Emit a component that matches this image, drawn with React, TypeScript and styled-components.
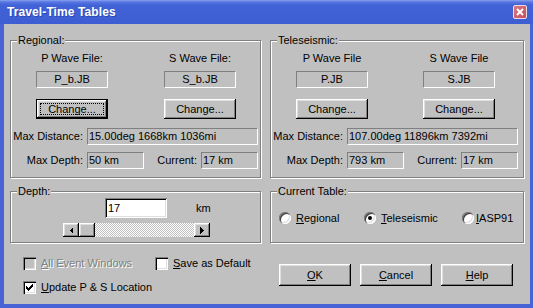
import React from 'react';
import styled, { createGlobalStyle, css } from 'styled-components';

const Global = createGlobalStyle`
  html, body { margin: 0; padding: 0; background: #c0c0c0; }
  body { font-family: "Liberation Sans", Arial, sans-serif; font-size: 11px; color: #000; }
  * { box-sizing: border-box; }
`;

const raised = css`
  box-shadow: inset -1px -1px #000, inset 1px 1px #fff, inset -2px -2px #808080, inset 2px 2px #dfdfdf;
`;

const Window = styled.div`
  width: 533px;
  height: 308px;
  display: flex;
  flex-direction: column;
  background: #4763d6;
`;

const TitleBar = styled.div`
  height: 24px;
  flex: none;
  display: flex;
  align-items: center;
  justify-content: space-between;
  padding: 0 6px 0 7px;
  background: linear-gradient(#86a2f0 0, #5877e2 2px, #4263d8 5px, #3d5dd3 100%);
`;

const Title = styled.span`
  font: bold 12px "Liberation Sans", Arial, sans-serif;
  color: #fff;
  text-shadow: 1px 1px #2c48b0;
  letter-spacing: 0.1px;
`;

const CloseButton = styled.div`
  width: 14px;
  height: 14px;
  border: 1px solid #f2dce2;
  border-radius: 2px;
  background: linear-gradient(135deg, #d87a86, #c2505e);
  display: flex;
  align-items: center;
  justify-content: center;
`;

const Body = styled.div`
  flex: 1;
  margin: 0 3px 4px 4px;
  background: #c0c0c0;
  padding: 16px 0 0 6px;
  display: flex;
  flex-direction: column;
`;

const GroupRow = styled.div<{ $top?: number }>`
  display: grid;
  grid-template-columns: 251px 254px;
  column-gap: 9px;
  margin-top: ${p => p.$top ?? 0}px;
`;

const Group = styled.div<{ $h: number }>`
  position: relative;
  height: ${p => p.$h}px;
  border: 1px solid #808080;
  box-shadow: inset 1px 1px #fff, 1px 1px #fff;
`;

const Legend = styled.span`
  position: absolute;
  top: -7px;
  left: 6px;
  padding: 0 1px;
  line-height: 13px;
  background: #c0c0c0;
`;

const FileRow = styled.div<{ $gap: number }>`
  display: flex;
  gap: ${p => p.$gap}px;
  margin: 11px 0 0 25px;
`;

const FileCol = styled.div`
  width: 72px;
  display: flex;
  flex-direction: column;
  align-items: center;
`;

const FileLabel = styled.div`
  line-height: 13px;
  white-space: nowrap;
`;

const Field = styled.div<{ $center?: boolean; $span?: boolean }>`
  height: 17px;
  width: 100%;
  border: 1px solid;
  border-color: #808080 #fff #fff #808080;
  line-height: 15px;
  padding: 0 1px;
  text-align: ${p => (p.$center ? 'center' : 'left')};
  white-space: nowrap;
  overflow: hidden;
  ${p => p.$span && css`grid-column: 2 / 5;`}
`;

const FileField = styled(Field)`
  margin-top: 6px;
`;

const Button = styled.div<{ $h?: number; $focused?: boolean; $w?: number }>`
  position: relative;
  width: ${p => p.$w ?? 72}px;
  height: ${p => p.$h ?? 20}px;
  background: #c0c0c0;
  display: flex;
  align-items: center;
  justify-content: center;
  ${raised}
  ${p =>
    p.$focused &&
    css`
      box-shadow: inset 0 0 0 1px #000, inset -2px -2px #000, inset 2px 2px #fff, inset -3px -3px #808080,
        inset 3px 3px #dfdfdf;
      &::after {
        content: '';
        position: absolute;
        inset: 4px;
        border: 1px dotted #000;
      }
    `}
`;

const FileButton = styled(Button)`
  margin-top: 11px;
`;

const InfoGrid = styled.div`
  display: grid;
  grid-template-columns: 71px 57px 49px 57px;
  grid-auto-rows: 17px;
  column-gap: 4px;
  row-gap: 7px;
  margin: 9px 0 0 1px;
`;

const InfoLabel = styled.div`
  text-align: right;
  line-height: 17px;
  white-space: nowrap;
`;

const DepthTop = styled.div`
  display: flex;
  align-items: center;
  margin: 6px 0 0 94px;
`;

const EditBox = styled.div`
  width: 62px;
  height: 20px;
  background: #fff;
  box-shadow: inset 1px 1px #808080, inset -1px -1px #fff, inset 2px 2px #000, inset -2px -2px #dfdfdf;
  padding: 0 3px;
  line-height: 20px;
`;

const Unit = styled.span`
  margin-left: 29px;
`;

const ScrollBar = styled.div`
  width: 147px;
  height: 14px;
  margin: 5px 0 0 52px;
  display: flex;
  background: repeating-conic-gradient(#fff 0 25%, #c0c0c0 0 50%) 0 0 / 2px 2px;
`;

const ScrollBtn = styled.div`
  width: 16px;
  height: 14px;
  flex: none;
  background: #c0c0c0;
  display: flex;
  align-items: center;
  justify-content: center;
  ${raised}
`;

const Track = styled.div`
  flex: 1;
  display: flex;
`;

const RadioRow = styled.div`
  display: grid;
  grid-template-columns: 85px 98px auto;
  margin: 19px 0 0 8px;
  height: 13px;
`;

const RadioItem = styled.div<{ $gap?: number }>`
  display: flex;
  align-items: center;
  gap: ${p => p.$gap ?? 5}px;
  white-space: nowrap;
`;

const RadioCircle = styled.span<{ $checked?: boolean }>`
  width: 12px;
  height: 12px;
  flex: none;
  border-radius: 50%;
  background: #fff;
  box-shadow: inset 1px 1px #808080, inset 2px 2px #404040, inset -1px -1px #fff, inset -2px -2px #dfdfdf;
  display: flex;
  align-items: center;
  justify-content: center;
  &::after {
    content: '';
    width: 4px;
    height: 4px;
    border-radius: 50%;
    background: ${p => (p.$checked ? '#000' : 'transparent')};
  }
`;

const BottomRow = styled.div`
  display: grid;
  grid-template-columns: 269px auto;
`;

const Checks = styled.div`
  display: flex;
  flex-direction: column;
  gap: 11px;
  padding: 14px 0 0 13px;
`;

const CheckLine = styled.div`
  display: flex;
  height: 13px;
`;

const CheckItem = styled.div<{ $w?: number; $disabled?: boolean }>`
  display: flex;
  align-items: center;
  gap: 5px;
  width: ${p => (p.$w ? `${p.$w}px` : 'auto')};
  white-space: nowrap;
  line-height: 13px;
  ${p =>
    p.$disabled &&
    css`
      color: #808080;
      text-shadow: 1px 1px #fff;
    `}
`;

const CheckBox = styled.span<{ $disabled?: boolean }>`
  width: 13px;
  height: 13px;
  flex: none;
  background: ${p => (p.$disabled ? '#c0c0c0' : '#fff')};
  box-shadow: inset 1px 1px #808080, inset 2px 2px #000, inset -1px -1px #fff, inset -2px -2px #dfdfdf;
  display: flex;
  align-items: center;
  justify-content: center;
`;

const Buttons = styled.div`
  display: flex;
  gap: 9px;
  margin-top: 21px;
`;

const Arrow = ({ dir }: { dir: 'left' | 'right' }) => (
  <svg width="4" height="7" viewBox="0 0 4 7" shapeRendering="crispEdges">
    <polygon points={dir === 'left' ? '4,0 4,7 0.5,3.5' : '0,0 0,7 3.5,3.5'} fill="#000" />
  </svg>
);

const Check = () => (
  <svg width="7" height="7" viewBox="0 0 7 7" shapeRendering="crispEdges">
    <path d="M0 2h1v1h1v1h1V3h1V2h1V1h1V0h1v3h-1v1h-1v1h-1v1h-1v1h-1V6H1V5H0z" fill="#000" />
  </svg>
);

type WaveProps = {
  legend: string;
  pLabel: string;
  sLabel: string;
  pFile: string;
  sFile: string;
  gap: number;
  focused?: boolean;
  distance: string;
  depth: string;
  current: string;
};

const WaveGroup = (p: WaveProps) => (
  <Group $h={138}>
    <Legend>{p.legend}</Legend>
    <FileRow $gap={p.gap}>
      <FileCol>
        <FileLabel>{p.pLabel}</FileLabel>
        <FileField $center>{p.pFile}</FileField>
        <FileButton $focused={p.focused}>Change...</FileButton>
      </FileCol>
      <FileCol>
        <FileLabel>{p.sLabel}</FileLabel>
        <FileField $center>{p.sFile}</FileField>
        <FileButton>Change...</FileButton>
      </FileCol>
    </FileRow>
    <InfoGrid>
      <InfoLabel>Max Distance:</InfoLabel>
      <Field $span>{p.distance}</Field>
      <InfoLabel>Max Depth:</InfoLabel>
      <Field>{p.depth}</Field>
      <InfoLabel>Current:</InfoLabel>
      <Field>{p.current}</Field>
    </InfoGrid>
  </Group>
);

export default function App() {
  return (
    <>
      <Global />
      <Window>
        <TitleBar>
          <Title>Travel-Time Tables</Title>
          <CloseButton>
            <svg width="8" height="8" viewBox="0 0 8 8">
              <path d="M1 1L7 7M7 1L1 7" stroke="#fff" strokeWidth="1.8" />
            </svg>
          </CloseButton>
        </TitleBar>
        <Body>
          <GroupRow>
            <WaveGroup
              legend="Regional:"
              pLabel="P Wave File:"
              sLabel="S Wave File:"
              pFile="P_b.JB"
              sFile="S_b.JB"
              gap={56}
              focused
              distance="15.00deg 1668km 1036mi"
              depth="50 km"
              current="17 km"
            />
            <WaveGroup
              legend="Teleseismic:"
              pLabel="P Wave File"
              sLabel="S Wave File"
              pFile="P.JB"
              sFile="S.JB"
              gap={55}
              distance="107.00deg 11896km 7392mi"
              depth="793 km"
              current="17 km"
            />
          </GroupRow>
          <GroupRow $top={13}>
            <Group $h={52}>
              <Legend>Depth:</Legend>
              <DepthTop>
                <EditBox>17</EditBox>
                <Unit>km</Unit>
              </DepthTop>
              <ScrollBar>
                <ScrollBtn>
                  <Arrow dir="left" />
                </ScrollBtn>
                <Track>
                  <ScrollBtn />
                </Track>
                <ScrollBtn>
                  <Arrow dir="right" />
                </ScrollBtn>
              </ScrollBar>
            </Group>
            <Group $h={52}>
              <Legend>Current Table:</Legend>
              <RadioRow>
                <RadioItem>
                  <RadioCircle />
                  <span>
                    <u>R</u>egional
                  </span>
                </RadioItem>
                <RadioItem>
                  <RadioCircle $checked />
                  <span>
                    <u>T</u>eleseismic
                  </span>
                </RadioItem>
                <RadioItem $gap={2}>
                  <RadioCircle />
                  <span>
                    <u>I</u>ASP91
                  </span>
                </RadioItem>
              </RadioRow>
            </Group>
          </GroupRow>
          <BottomRow>
            <Checks>
              <CheckLine>
                <CheckItem $w={132} $disabled>
                  <CheckBox $disabled />
                  <span>
                    <u>A</u>ll Event Windows
                  </span>
                </CheckItem>
                <CheckItem>
                  <CheckBox />
                  <span>
                    <u>S</u>ave as Default
                  </span>
                </CheckItem>
              </CheckLine>
              <CheckLine>
                <CheckItem>
                  <CheckBox>
                    <Check />
                  </CheckBox>
                  <span>
                    <u>U</u>pdate P &amp; S Location
                  </span>
                </CheckItem>
              </CheckLine>
            </Checks>
            <Buttons>
              <Button $h={22}>
                <span>
                  <u>O</u>K
                </span>
              </Button>
              <Button $h={22}>
                <span>
                  <u>C</u>ancel
                </span>
              </Button>
              <Button $h={22}>
                <span>
                  <u>H</u>elp
                </span>
              </Button>
            </Buttons>
          </BottomRow>
        </Body>
      </Window>
    </>
  );
}
